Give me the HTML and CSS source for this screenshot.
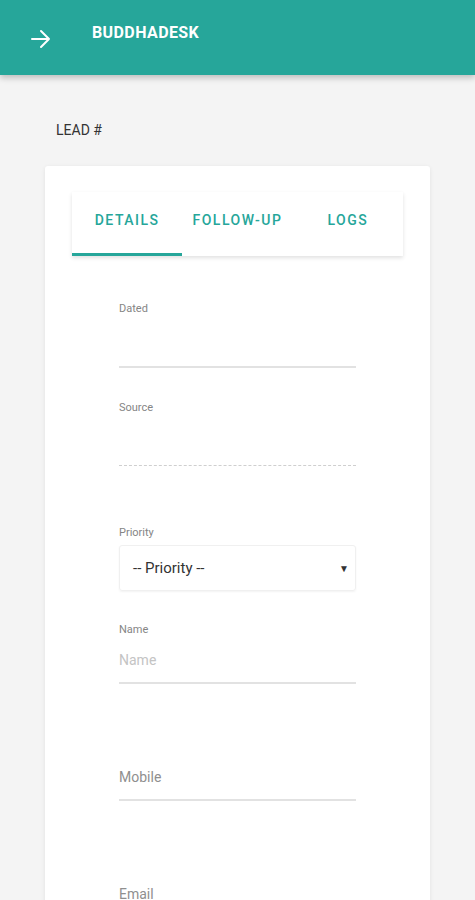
FILE: index.html
```html
<!DOCTYPE html>
<html lang="en">
<head>
<meta charset="utf-8">
<title>Buddhadesk - Lead</title>
<link rel="stylesheet" href="styles.css">
</head>
<body>
<header class="topbar">
  <button class="back" aria-label="Back">
    <svg width="22" height="22" viewBox="0 0 22 22"><path d="M2 11h17M11 3l8 8-8 8" fill="none" stroke="#fff" stroke-width="2" stroke-linecap="round" stroke-linejoin="round"/></svg>
  </button>
  <h1 class="brand">BUDDHADESK</h1>
</header>
<main class="page">
  <div class="lead-title">LEAD #</div>
  <section class="card">
    <nav class="tabs">
      <div class="tab active">DETAILS</div>
      <div class="tab">FOLLOW-UP</div>
      <div class="tab">LOGS</div>
    </nav>
    <form class="form">
      <div class="field f-dated">
        <label class="label">Dated</label>
        <div class="line-input"></div>
      </div>
      <div class="field f-source">
        <label class="label">Source</label>
        <div class="line-input dashed"></div>
      </div>
      <div class="field f-priority">
        <label class="label">Priority</label>
        <div class="select"><span>-- Priority --</span><span class="caret">▼</span></div>
      </div>
      <div class="field f-name">
        <label class="label">Name</label>
        <input class="text-input light" placeholder="Name">
      </div>
      <div class="field f-mobile">
        <input class="text-input" placeholder="Mobile">
      </div>
      <div class="field f-email">
        <input class="text-input" placeholder="Email">
      </div>
    </form>
  </section>
</main>
</body>
</html>
```
FILE: styles.css
```css
* { box-sizing: border-box; }
html, body { margin: 0; padding: 0; }
body {
  background: #f4f4f4;
  font-family: Roboto, "Noto Sans", Arial, sans-serif;
  width: 475px;
  height: 900px;
  overflow: hidden;
}
.topbar {
  height: 75px;
  background: #26a69a;
  display: flex;
  align-items: flex-start;
  box-shadow: 0 3px 6px rgba(0,0,0,0.22);
  position: relative;
  z-index: 2;
}
.back {
  border: 0;
  background: none;
  padding: 0;
  margin: 28px 0 0 30px;
  width: 22px;
  height: 22px;
  display: flex;
}
.brand {
  margin: 23px 0 0 40px;
  font-size: 16px;
  line-height: 19px;
  font-weight: 700;
  color: #fff;
  letter-spacing: 0.4px;
}
.page {
  padding: 0 45px;
}
.lead-title {
  margin: 46px 0 0 11px;
  font-size: 14px;
  line-height: 18px;
  color: #333;
}
.card {
  margin-top: 27px;
  background: #fff;
  border-radius: 3px;
  box-shadow: 0 1px 4px rgba(0,0,0,0.08);
  padding: 26px 27px 40px;
  height: 760px;
}
.tabs {
  display: grid;
  grid-template-columns: 1fr 1fr 1fr;
  height: 64px;
  box-shadow: 0 2px 4px rgba(0,0,0,0.12);
  background: #fff;
}
.tab {
  display: flex;
  align-items: flex-start;
  justify-content: center;
  padding-top: 19px;
  font-size: 14px;
  line-height: 18px;
  font-weight: 500;
  letter-spacing: 1.5px;
  color: #26a69a;
}
.tab.active {
  border-bottom: 3px solid #26a69a;
}
.form {
  width: 237px;
  margin-left: 47px;
  display: flex;
  flex-direction: column;
}
.field { display: flex; flex-direction: column; }
.label {
  font-size: 11px;
  line-height: 14px;
  color: #858585;
}
.f-dated { margin-top: 46px; }
.f-source { margin-top: 33px; }
.f-priority { margin-top: 60px; }
.f-name { margin-top: 32px; }
.f-mobile { margin-top: 70px; }
.f-email { margin-top: 70px; }
.line-input {
  height: 52px;
  border-bottom: 2px solid #e2e2e2;
}
.line-input.dashed {
  height: 51px;
  border-bottom: 1px dashed #cfcfcf;
}
.select {
  margin-top: 5px;
  height: 46px;
  border: 1px solid #f0f0f0;
  border-radius: 3px;
  box-shadow: 0 1px 2px rgba(0,0,0,0.05);
  display: flex;
  align-items: center;
  justify-content: space-between;
  padding: 0 6px 0 13px;
  font-size: 15px;
  color: #333;
}
.caret { font-size: 10px; color: #333; }
.text-input {
  height: 47px;
  border: 0;
  border-bottom: 2px solid #e2e2e2;
  padding: 0;
  font-family: inherit;
  font-size: 14px;
  color: #333;
  background: transparent;
  outline: none;
}
.text-input::placeholder { color: #8f8f8f; }
.text-input.light::placeholder { color: #c4c4c4; }
```
